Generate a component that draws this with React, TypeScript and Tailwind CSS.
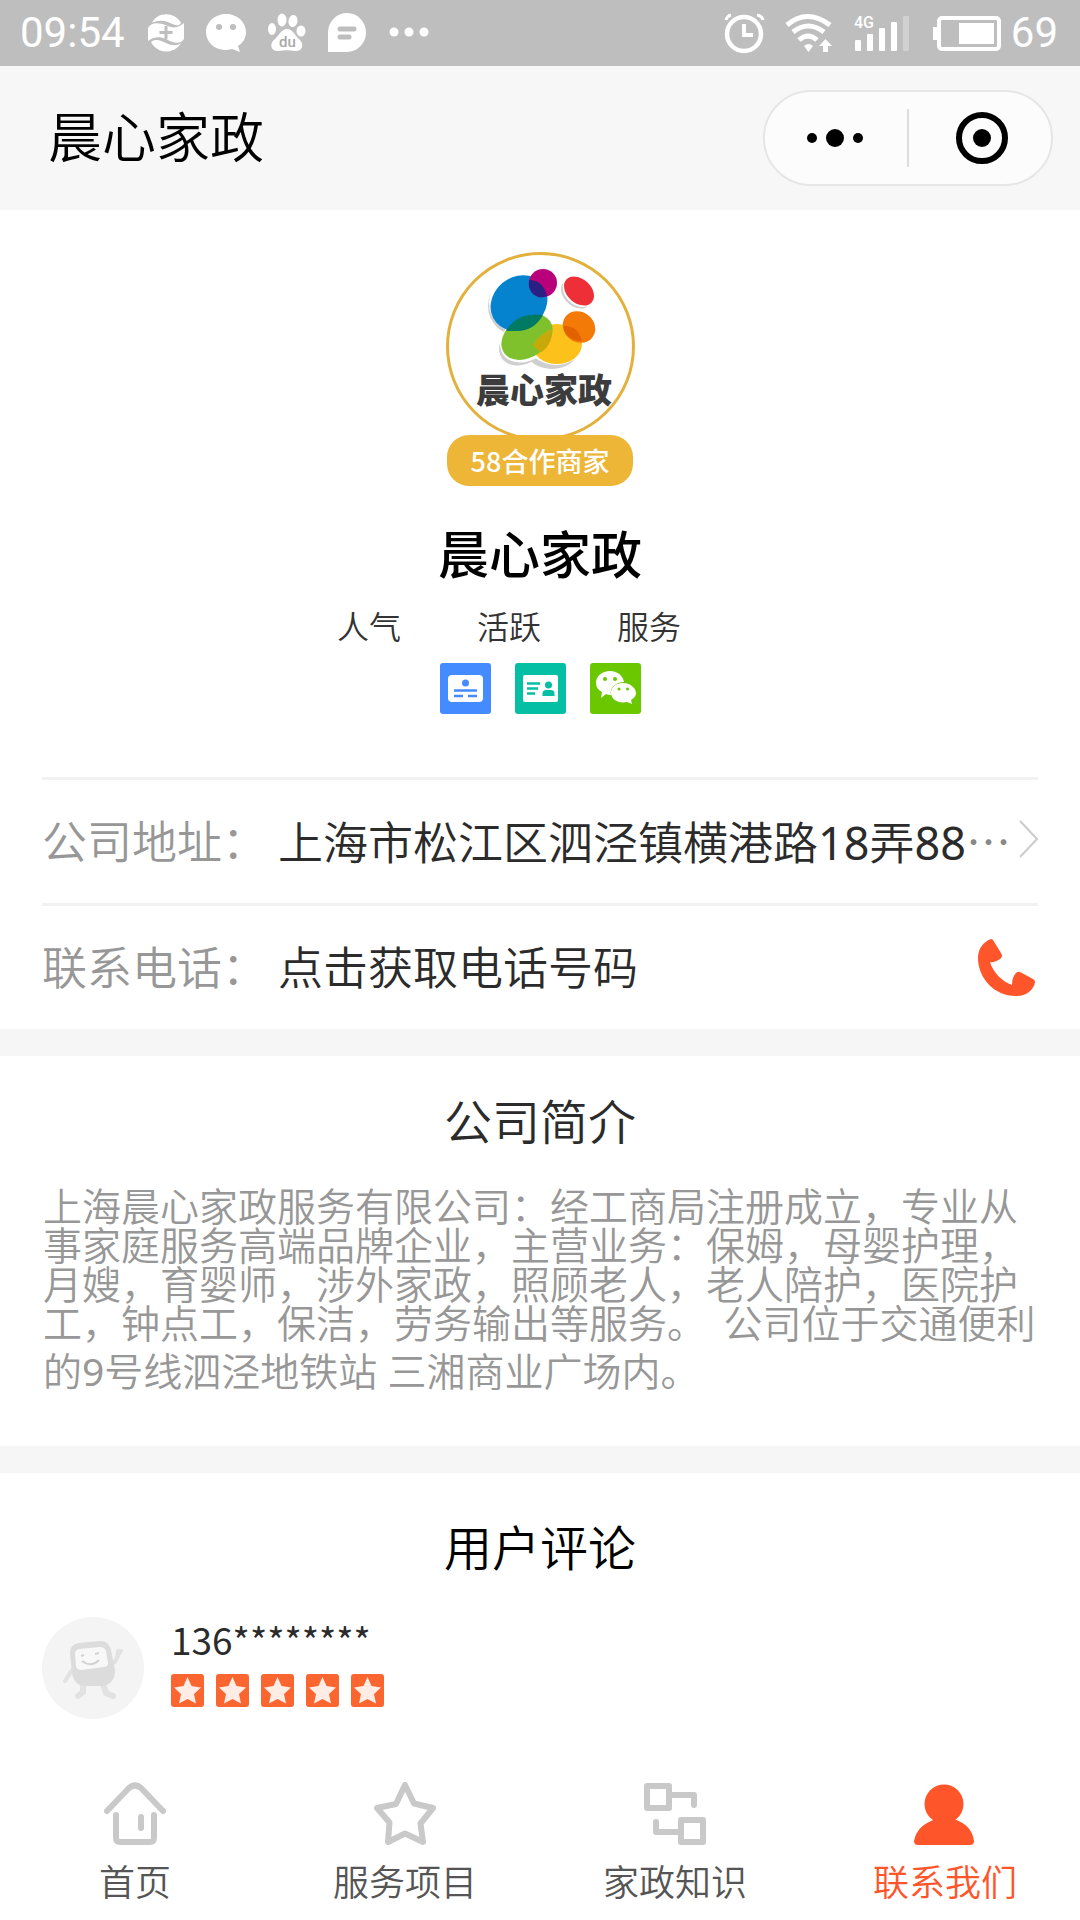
import React from 'react';

const TABS = [
  { label: '首页', icon: <HomeIcon /> },
  { label: '服务项目', icon: <StarIcon /> },
  { label: '家政知识', icon: <FlowIcon /> },
  { label: '联系我们', icon: <PersonIcon />, active: true },
];

function HomeIcon() {
  return (
    <svg width="62" height="64" viewBox="0 0 62 64" fill="none" stroke="#c9c9c9" strokeWidth="6" strokeLinecap="round" strokeLinejoin="round">
      <path d="M3 29L24.500 6.500Q31 0.500 37.500 6.500L59 29" />
      <path d="M12 33V56Q12 60 16 60H46Q50 60 50 56V33" />
      <path d="M37 35V46" />
    </svg>
  );
}

function StarIcon() {
  return (
    <svg width="62" height="64" viewBox="0 0 62 64" fill="none" stroke="#c9c9c9" strokeWidth="6" strokeLinejoin="round">
      <path d="M31 3L40 21.500L59 26L46.500 41.500L49 60L31 51.500L14 60L15.500 40.500L3 26L22 22Z" />
    </svg>
  );
}

function FlowIcon() {
  return (
    <svg width="62" height="64" viewBox="0 0 62 64" fill="none" stroke="#c9c9c9" strokeWidth="6" strokeLinecap="round" strokeLinejoin="round">
      <rect x="3" y="4" width="22" height="22" />
      <rect x="37" y="38" width="22" height="22" />
      <path d="M25 13H50V23M37 50H12V40" />
    </svg>
  );
}

function PersonIcon() {
  return (
    <svg width="62" height="64" viewBox="0 0 62 64" fill="#ff552a">
      <circle cx="30" cy="22" r="19.500" />
      <path d="M22 37Q30 41 40 37Q58 43 60 59Q60 63 56 63H4Q0 63 0 59Q3 43 22 37Z" />
    </svg>
  );
}

const StatusBar = () => (
  <div className="flex h-[66px] items-center justify-between bg-[#bebebe] pl-5 pr-[22px] font-['Roboto',sans-serif] text-[42px] font-normal leading-none text-white">
    <div className="flex items-center">
      <span>09:54</span>
      <svg className="ml-[23px]" width="284" height="42" viewBox="0 0 284 42" fill="#fff">
        {/* coin badge */}
        <path d="M0 16C4 9 13 11 20 14C27 17 31 15 36 11L36 27C32 33 25 31 18 27C11 24 5 25 0 29Z" />
        <path d="M4 11C9 0 26 -1 33 11C31 15 26 13 22 11C16 8 9 8 4 11Z" />
        <path d="M3 30C8 26 13 29 18 31C24 34 29 34 33 31C26 43 9 42 3 30Z" />
        <path d="M18 14V27M11.500 20.500H24.500" stroke="#bebebe" strokeWidth="3" />
        {/* chat */}
        <path d="M78 2C89 2 98 10 98 20C98 26 95 31 90 34L92 40L84 37C70 41 58 32 58 20C58 10 67 2 78 2Z" />
        <circle cx="71" cy="15" r="3" fill="#bebebe" />
        <circle cx="85" cy="15" r="3" fill="#bebebe" />
        {/* paw */}
        <ellipse cx="124" cy="17" rx="4" ry="6" />
        <ellipse cx="134" cy="8" rx="4.500" ry="6.500" />
        <ellipse cx="145" cy="9" rx="4.500" ry="6" transform="rotate(10 145 9)" />
        <ellipse cx="153" cy="19" rx="4.500" ry="5.500" />
        <path d="M139 17C145 17 147 24 152 28C157 34 153 40 147 39C142 38 136 38 131 39C123 40 121 32 126 28C131 24 133 17 139 17Z" />
        <text x="131" y="35" fontSize="15" fontWeight="500" fill="#a8a8a8">du</text>
        {/* message */}
        <path d="M180 40V20A19 19.500 0 1 1 199 40Z" />
        <path d="M192 17H206M192 25H201" stroke="#bebebe" strokeWidth="5" strokeLinecap="round" />
        <circle cx="246" cy="20" r="4.500" />
        <circle cx="261" cy="20" r="4.500" />
        <circle cx="276" cy="20" r="4.500" />
      </svg>
    </div>
    <div className="flex items-center gap-[10px]">
      <svg width="278" height="42" viewBox="0 0 278 42" fill="none" stroke="#fff">
        {/* alarm */}
        <circle cx="21" cy="22" r="17" strokeWidth="4.500" />
        <path d="M21 12V23H30" strokeWidth="4" />
        <path d="M3 8Q4 4 8 3M34 3Q39 4 40 8" strokeWidth="3" />
        {/* wifi */}
        <path d="M64 13Q84 -4 107 13M70 20Q85 8 101 20M76 28Q85 20 94 28" strokeWidth="5" />
        <path d="M81 34Q85.500 30 90 34L85.500 40ZM96 34L102.500 27L109 34H105V40H100V34Z" fill="#fff" stroke="none" />
        {/* signal */}
        <text x="131" y="16" fontSize="16" fontWeight="500" fill="#fff" stroke="none">4G</text>
        <g fill="#fff" stroke="none">
          <rect x="132" y="28" width="6" height="11" rx="1" />
          <rect x="144" y="22" width="6" height="17" rx="1" />
          <rect x="156" y="16" width="6" height="23" rx="1" />
          <rect x="168" y="10" width="6" height="29" rx="1" />
          <rect x="180" y="4" width="6" height="35" rx="1" opacity="0.300" />
          <rect x="210" y="15" width="5" height="13" />
          <rect x="236" y="11" width="35" height="21" />
        </g>
        <rect x="216" y="6" width="60" height="31" rx="3" strokeWidth="4" />
      </svg>
      <span>69</span>
    </div>
  </div>
);

const NavBar = () => (
  <header className="flex h-36 items-center justify-between bg-[#f7f7f7] pl-12 pr-[27px]">
    <h1 className="pb-[6px] text-[54px] leading-none text-black">晨心家政</h1>
    <div className="flex h-24 w-[290px] items-center rounded-full border-2 border-[#e6e6e6] bg-[#fcfcfc]">
      <button aria-label="更多" className="flex flex-1 items-center justify-center gap-[9px] pr-[3px]">
        <span className="size-[10px] rounded-full bg-black" />
        <span className="size-[18px] rounded-full bg-black" />
        <span className="size-[10px] rounded-full bg-black" />
      </button>
      <span className="h-[58px] w-[2px] bg-[#dcdcdc]" />
      <button aria-label="关闭" className="flex flex-1 items-center justify-center pl-[3px]">
        <span className="flex size-[52px] items-center justify-center rounded-full border-6 border-black">
          <span className="size-[18px] rounded-full bg-black" />
        </span>
      </button>
    </div>
  </header>
);

const Logo = () => (
  <svg className="size-[189px]" viewBox="0 0 189 189">
    <circle cx="94.500" cy="94.500" r="93" fill="#fff" stroke="#e3b13b" strokeWidth="3" />
    <g fill="#cfcfcf">
      <ellipse cx="70" cy="54" rx="28" ry="29" />
      <ellipse cx="78" cy="91" rx="27" ry="20" transform="rotate(-35 78 91)" />
      <ellipse cx="106" cy="98" rx="26" ry="19" />
      <ellipse cx="130" cy="42" rx="17" ry="12" transform="rotate(42 130 42)" />
    </g>
    <g fill="#fff">
      <ellipse cx="74" cy="51" rx="31" ry="30" />
      <ellipse cx="81" cy="86" rx="29" ry="22" transform="rotate(-35 81 86)" />
      <ellipse cx="110" cy="91" rx="28" ry="22" />
      <ellipse cx="133" cy="39" rx="18" ry="14" transform="rotate(42 133 39)" />
    </g>
    <ellipse cx="111" cy="92" rx="25" ry="20" fill="#fcc21b" />
    <ellipse cx="81" cy="85" rx="28" ry="20" transform="rotate(-35 81 85)" fill="#7fc12c" />
    <path d="M87 93Q93 83 105 77Q108 90 96 100Q90 98 87 93Z" fill="#c8a90a" />
    <ellipse cx="73" cy="51" rx="30" ry="26" transform="rotate(-40 73 51)" fill="#0583cf" />
    <path d="M60 79Q71 60 97 63Q88 79 71 79Z" fill="#007a63" />
    <circle cx="97" cy="31" r="14" fill="#b9007b" />
    <path d="M83 28Q97 28 101 44Q93 48 86 41Q82 36 83 28Z" fill="#2b1f83" />
    <ellipse cx="133" cy="39" rx="17" ry="12" transform="rotate(42 133 39)" fill="#ee2f38" />
    <ellipse cx="133" cy="75" rx="17" ry="15" transform="rotate(40 133 75)" fill="#f47a08" />
    <path d="M117 74Q132 73 136 89Q120 89 117 74Z" fill="#e26200" />
    <text x="30" y="151" fontSize="34" fontWeight="900" fill="#3c3c3c">晨心家政</text>
  </svg>
);

const Profile = () => (
  <section className="flex flex-col items-center pt-[42px]">
    <Logo />
    <span className="relative z-10 -mt-[6px] flex h-[51px] w-[186px] items-center justify-center rounded-[22px] bg-[#edb637] text-[27px] font-medium leading-none text-white">
      58合作商家
    </span>
    <h2 className="mt-10 text-[51px] font-medium leading-[52px] text-black">晨心家政</h2>
    <div className="mt-[27px] flex w-[406px] text-[32px] leading-10 text-[#333]">
      <span className="w-[140px]">人气</span>
      <span className="w-[140px]">活跃</span>
      <span>服务</span>
    </div>
    <div className="mt-[18px] flex gap-6">
      <svg width="51" height="51" viewBox="0 0 51 51">
        <rect width="51" height="51" rx="3" fill="#448bff" />
        <rect x="8" y="12" width="35" height="27" rx="4" fill="#fff" />
        <circle cx="25.500" cy="20" r="3.500" fill="#448bff" />
        <path d="M14 27.500H37M14 33H23M28 33H37" stroke="#448bff" strokeWidth="2.500" />
      </svg>
      <svg width="51" height="51" viewBox="0 0 51 51">
        <rect width="51" height="51" rx="3" fill="#04bfa3" />
        <rect x="8" y="12" width="35" height="27" rx="2" fill="#fff" />
        <path d="M12 20.500H25M12 25.500H23M12 30.500H20" stroke="#04bfa3" strokeWidth="2.500" />
        <circle cx="33.500" cy="22" r="3.500" fill="#04bfa3" />
        <path d="M27.500 33V30Q28 27 31 27H36Q39 27 39.500 30V33Z" fill="#04bfa3" />
      </svg>
      <svg width="51" height="51" viewBox="0 0 51 51">
        <rect width="51" height="51" rx="3" fill="#6bc800" />
        <path d="M20 8C28 8 33 13 34 19C26 19 19 25 21 32Q18 32 16 31L11 35L12 29C8 27 6 24 6 20C6 13 12 8 20 8Z" fill="#fff" />
        <path d="M33 20C40 20 46 25 46 30C46 33 44 35 41 37L42 41L37 39C28 41 21 36 21 30C21 24 26 20 33 20Z" fill="#fff" />
        <circle cx="15" cy="16" r="2" fill="#6bc800" />
        <circle cx="25" cy="16" r="2" fill="#6bc800" />
        <circle cx="29" cy="26" r="1.500" fill="#6bc800" />
        <circle cx="37.500" cy="26" r="1.500" fill="#6bc800" />
      </svg>
    </div>
  </section>
);

const ContactRows = () => (
  <section className="mx-[42px] mt-[63px] font-['Noto_Sans','Noto_Sans_CJK_SC',sans-serif] text-[45px] leading-[54px]">
    <a href="#address" className="flex h-[126px] items-center border-t-3 border-[#f2f2f2] text-[#2b2b2b]">
      <span className="w-[236px] shrink-0 text-[#979797]">公司地址：</span>
      <span className="flex-1 whitespace-nowrap">
        上海市松江区泗泾镇横港路<span className="font-normal">18</span>弄<span className="font-normal">88</span>
        <span className="font-['Noto_Sans_CJK_SC',sans-serif] text-[#888]">…</span>
      </span>
      <svg className="shrink-0" width="20" height="46" viewBox="0 0 20 46" fill="none" stroke="#ccc" strokeWidth="2">
        <path d="M2 2L19 20L2 38" />
      </svg>
    </a>
    <a href="#phone" className="flex h-[126px] items-center border-t-3 border-[#f2f2f2] text-[#2b2b2b]">
      <span className="w-[236px] shrink-0 text-[#979797]">联系电话：</span>
      <span className="flex-1">点击获取电话号码</span>
      <svg className="mr-[3px] shrink-0" width="57" height="58" viewBox="0 0 57 58" fill="#ff552a">
        <path d="M13 0C5 3 0 10 0 19C0 40 18 58 39 57C48 57 56 51 57 43Q57 41 55 40L42 33Q40 32 38 34C35 37 34 41 34 46C25 43 15 34 12 23C16 24 21 21 23 19Q25 17 23 14L15 1Q14 0 13 0Z" />
      </svg>
    </a>
  </section>
);

const Intro = () => (
  <section className="border-y-[27px] border-[#f6f6f6] px-[43px] pb-[45px] pt-9">
    <h2 className="text-center text-[48px] leading-[54px] text-[#2b2b2b]">公司简介</h2>
    <div className="mt-[39px] whitespace-nowrap text-[39px] leading-[39px] text-[#979797]">
      <p>
        上海晨心家政服务有限公司：经工商局注册成立，专业从
        <br />
        事家庭服务高端品牌企业，主营业务：保姆，母婴护理，
        <br />
        月嫂，育婴师，涉外家政，照顾老人，老人陪护，医院护
        <br />
        工，钟点工，保洁，劳务输出等服务。&nbsp; 公司位于交通便利
      </p>
      <p className="font-['Noto_Sans','Noto_Sans_CJK_SC',sans-serif] leading-[60px]">
        的<span className="font-normal">9</span>号线泗泾地铁站 三湘商业广场内。
      </p>
    </div>
  </section>
);

const Avatar = () => (
  <svg className="size-[102px]" viewBox="0 0 102 102">
    <circle cx="51" cy="51" r="51" fill="#f4f4f4" />
    <g fill="none" stroke="#e2e2e2" strokeWidth="4" strokeLinecap="round">
      <path d="M30 53L23 64M70 47Q76 44 76 34M75 40L79 34" />
      <path d="M41 67V75L36 79M61 67L64 76L71 79" strokeWidth="6" />
    </g>
    <path d="M28 36Q28 27 37 26L58 24Q67 24 69 33L73 53Q73 68 59 69H44Q32 69 30 56Z" fill="#dcdcdc" />
    <path d="M33 37Q33 33 37 32L58 30Q63 30 64 34L66 46Q66 50 62 50L39 53Q35 53 34 49Z" fill="#f8f8f8" />
    <path d="M40 44Q49 51 57 43M39 39L42 38M53 37L57 36" stroke="#d2d2d2" strokeWidth="2" fill="none" />
  </svg>
);

const Reviews = () => (
  <section className="px-[42px] pt-[45px]">
    <h2 className="text-center text-[48px] leading-[54px] text-black">用户评论</h2>
    <div className="mt-[45px] flex items-start gap-[27px]">
      <Avatar />
      <div>
        <p className="text-[37px] font-normal leading-[44px] text-[#2b2b2b]">136********</p>
        <div className="mt-[13px] flex gap-3">
          {[1, 2, 3, 4, 5].map((n) => (
            <svg key={n} width="33" height="33" viewBox="0 0 33 33">
              <rect width="33" height="33" rx="3" fill="#fb6630" />
              <path d="M16.500 3L20.500 12L30 13.500L23 20L25 29.500L16.500 25L8 29.500L10 20L3 13.500L12.500 12Z" fill="#ffece5" />
            </svg>
          ))}
        </div>
      </div>
    </div>
  </section>
);

const TabBar = () => (
  <nav className="mt-auto grid grid-cols-4 pb-[15px]">
    {TABS.map((tab) => (
      <a
        key={tab.label}
        href={`#${tab.label}`}
        className={`flex flex-col items-center gap-[9px] text-[36px] leading-[50px] ${tab.active ? 'text-[#ff552a]' : 'text-[#555]'}`}
      >
        {tab.icon}
        {tab.label}
      </a>
    ))}
  </nav>
);

export default function App() {
  return (
    <div lang="zh-CN" className="flex min-h-screen flex-col bg-white font-['Noto_Sans_CJK_SC',sans-serif] font-[350]">
      <StatusBar />
      <NavBar />
      <Profile />
      <ContactRows />
      <Intro />
      <Reviews />
      <TabBar />
    </div>
  );
}
